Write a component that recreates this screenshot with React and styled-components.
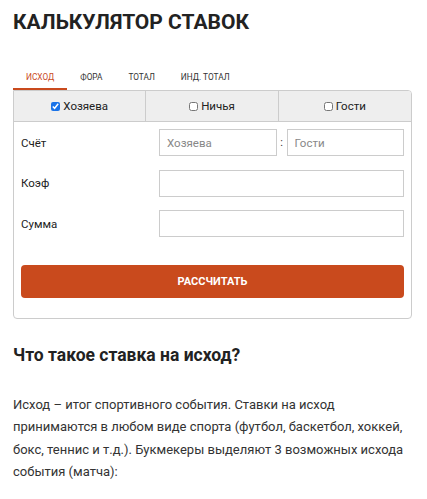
import styled, { createGlobalStyle } from "styled-components";

const Global = createGlobalStyle`
  body {
    margin: 0;
    background: #fff;
    font-family: Roboto, "Liberation Sans", Arial, sans-serif;
    color: #333;
  }
`;

const Page = styled.div`
  padding: 0 15px 0 13px;
`;

const Title = styled.h1`
  margin: 0;
  padding-top: 10px;
  font-size: 21px;
  line-height: 25px;
  font-weight: 700;
  color: #222;
  text-transform: uppercase;
`;

const Tabs = styled.div`
  display: flex;
  margin-top: 31px;
  position: relative;
  z-index: 1;
`;

const Tab = styled.div`
  padding: 0 13px;
  height: 22px;
  font-size: 8.3px;
  line-height: 22px;
  text-transform: uppercase;
  color: ${(p) => (p.$active ? "#c94a1d" : "#333")};
  border-bottom: 2px solid ${(p) => (p.$active ? "#c94a1d" : "transparent")};
`;

const Card = styled.div`
  border: 1px solid #ccc;
  border-radius: 0 4px 4px 4px;
  overflow: hidden;
`;

const Choices = styled.div`
  display: grid;
  grid-template-columns: 1fr 1fr 1fr;
  background: #eee;
  border-bottom: 1px solid #ccc;
`;

const Choice = styled.label`
  display: flex;
  align-items: center;
  justify-content: center;
  gap: 3px;
  height: 30px;
  font-size: 11.5px;
  color: #222;
  border-right: 1px solid #ccc;
  &:last-child {
    border-right: 0;
  }
  input {
    width: 9px;
    height: 9px;
    margin: 0;
    accent-color: #1a73e8;
  }
`;

const Form = styled.div`
  padding: 7px 7px 20px 7px;
  display: flex;
  flex-direction: column;
  gap: 13.5px;
`;

const Row = styled.div`
  display: flex;
  align-items: center;
`;

const Label = styled.div`
  flex: 0 0 138px;
  font-size: 11.5px;
  color: #222;
`;

const Fields = styled.div`
  flex: 1;
  min-width: 0;
  display: flex;
  align-items: center;
`;

const Input = styled.input`
  flex: 1 1 0;
  width: 0;
  min-width: 0;
  height: 27px;
  box-sizing: border-box;
  border: 1px solid #ccc;
  padding: 0 7px;
  font-family: inherit;
  font-size: 11.5px;
  color: #333;
  &::placeholder {
    color: #888;
  }
`;

const Colon = styled.span`
  flex: 0 0 10px;
  text-align: center;
  font-size: 11px;
`;

const Button = styled.button`
  margin-top: 14px;
  height: 33px;
  border: 0;
  border-radius: 4px;
  background: #c94a1d;
  color: #fff;
  font-family: inherit;
  font-size: 11px;
  font-weight: 700;
  text-transform: uppercase;
`;

const Subtitle = styled.h2`
  margin: 25px 0 0;
  font-size: 17.5px;
  line-height: 22px;
  font-weight: 700;
  color: #222;
`;

const Text = styled.p`
  margin: 28px 0 0;
  max-width: 392px;
  font-size: 13px;
  line-height: 22.5px;
  color: #333;
`;

export default function App() {
  const tabs = ["Исход", "Фора", "Тотал", "Инд. тотал"];
  return (
    <Page>
      <Global />
      <Title>Калькулятор ставок</Title>
      <Tabs>
        {tabs.map((t, i) => (
          <Tab key={t} $active={i === 0}>
            {t}
          </Tab>
        ))}
      </Tabs>
      <Card>
        <Choices>
          <Choice>
            <input type="checkbox" defaultChecked /> Хозяева
          </Choice>
          <Choice>
            <input type="checkbox" /> Ничья
          </Choice>
          <Choice>
            <input type="checkbox" /> Гости
          </Choice>
        </Choices>
        <Form>
          <Row>
            <Label>Счёт</Label>
            <Fields>
              <Input placeholder="Хозяева" />
              <Colon>:</Colon>
              <Input placeholder="Гости" />
            </Fields>
          </Row>
          <Row>
            <Label>Коэф</Label>
            <Fields>
              <Input />
            </Fields>
          </Row>
          <Row>
            <Label>Сумма</Label>
            <Fields>
              <Input />
            </Fields>
          </Row>
          <Button>Рассчитать</Button>
        </Form>
      </Card>
      <Subtitle>Что такое ставка на исход?</Subtitle>
      <Text>
        Исход – итог спортивного события. Ставки на исход принимаются в любом
        виде спорта (футбол, баскетбол, хоккей, бокс, теннис и т.д.). Букмекеры
        выделяют 3 возможных исхода события (матча):
      </Text>
    </Page>
  );
}
